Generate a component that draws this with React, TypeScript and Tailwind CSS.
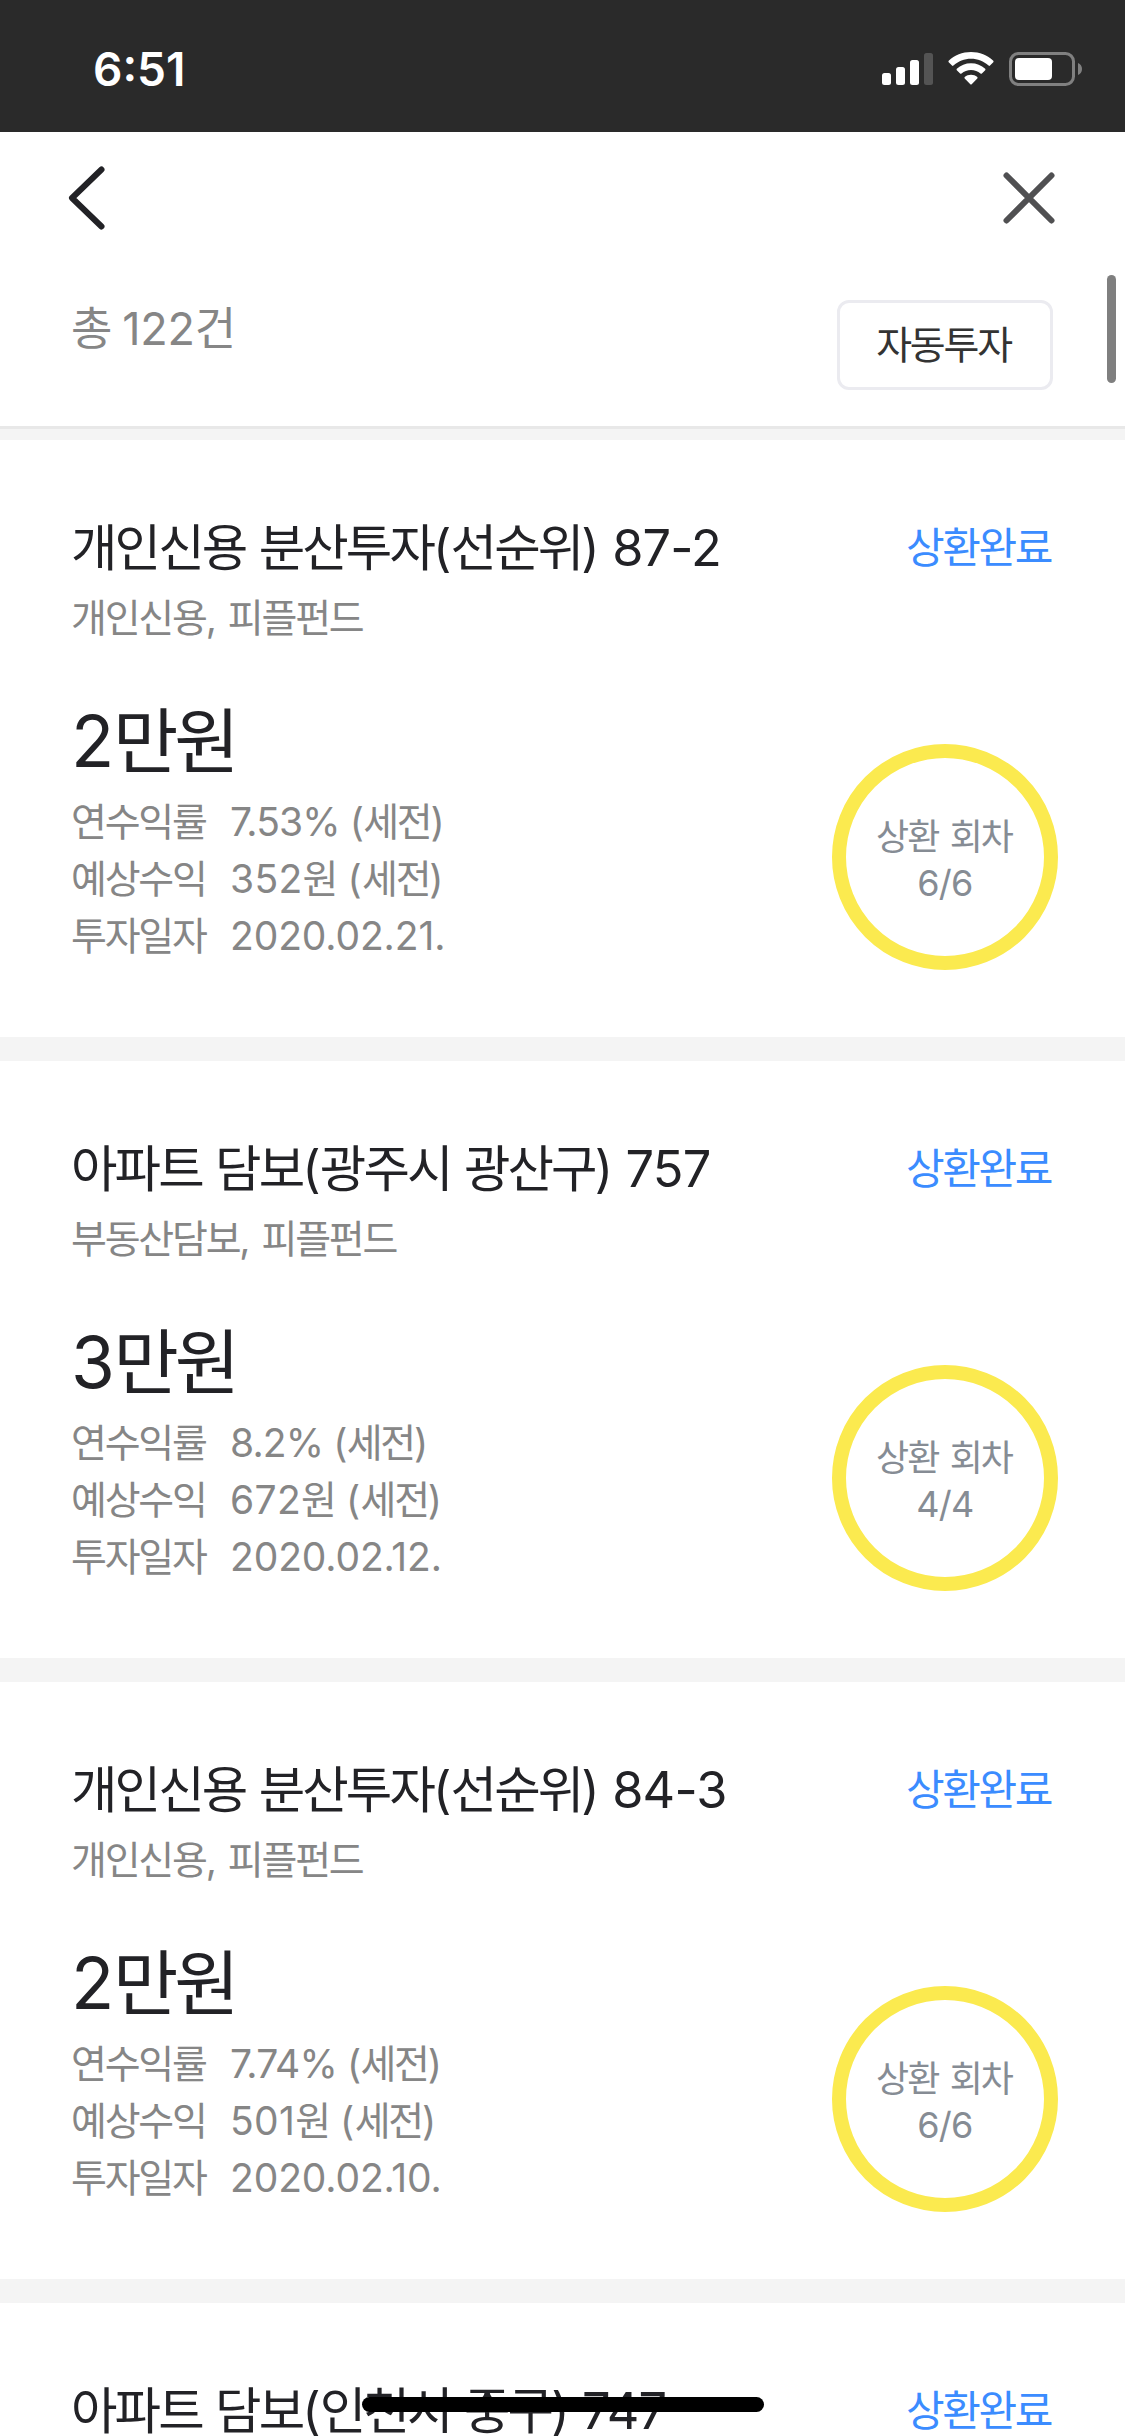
type Investment = {
  title: string;
  category?: string;
  detail?: {
    amount: string;
    rate: string;
    profit: string;
    date: string;
    round: string;
  };
};

const investments: Investment[] = [
  {
    title: "개인신용 분산투자(선순위) 87-2",
    category: "개인신용, 피플펀드",
    detail: {
      amount: "2만원",
      rate: "7.53% (세전)",
      profit: "352원 (세전)",
      date: "2020.02.21.",
      round: "6/6",
    },
  },
  {
    title: "아파트 담보(광주시 광산구) 757",
    category: "부동산담보, 피플펀드",
    detail: {
      amount: "3만원",
      rate: "8.2% (세전)",
      profit: "672원 (세전)",
      date: "2020.02.12.",
      round: "4/4",
    },
  },
  {
    title: "개인신용 분산투자(선순위) 84-3",
    category: "개인신용, 피플펀드",
    detail: {
      amount: "2만원",
      rate: "7.74% (세전)",
      profit: "501원 (세전)",
      date: "2020.02.10.",
      round: "6/6",
    },
  },
  { title: "아파트 담보(인천시 중구) 747" },
];

// Hangul needs tighter tracking than the latin runs next to it.
function Mixed({ text, latin = "tracking-[-0.02em]" }: { text: string; latin?: string }) {
  return (
    <>
      {text.split(/([가-힣]+)/).map((run, i) => (
        <span key={i} className={i % 2 ? "tracking-[-0.057em]" : latin}>
          {run}
        </span>
      ))}
    </>
  );
}

function StatusBar() {
  return (
    <div className="flex h-[132px] shrink-0 items-start justify-between bg-[#2a2a2a] pr-[42px] pl-[93px] text-white">
      <span className="pt-[44px] text-[46px] leading-[50px] font-semibold">6:51</span>
      <div className="flex items-start gap-[15px] pt-[52px]">
        <svg width="51" height="34" viewBox="0 0 51 34" fill="currentColor">
          <rect x="0" y="21" width="9" height="12" rx="2.5" />
          <rect x="14" y="15" width="9" height="18" rx="2.5" />
          <rect x="28" y="8" width="9" height="25" rx="2.5" />
          <rect x="42" y="1" width="9" height="32" rx="2.5" opacity="0.2" />
        </svg>
        <svg width="46" height="34" viewBox="0 0 46 34" fill="currentColor">
          <path d="M23 0C31.500 0 39.500 3.200 45.300 8.800C45.700 9.200 45.700 9.800 45.300 10.200L42 13.600C41.600 14 41 14 40.600 13.600C35.800 9.200 29.600 6.800 23 6.800S10.200 9.200 5.400 13.600C5 14 4.400 14 4 13.600L.7 10.200C.3 9.800 .3 9.200 .7 8.800C6.500 3.200 14.500 0 23 0Z" />
          <path d="M23 11.300C28.400 11.300 33.400 13.300 37.200 16.800C37.600 17.200 37.600 17.800 37.200 18.200L33.900 21.500C33.500 21.900 32.900 21.900 32.500 21.500C29.900 19.300 26.600 18 23 18S16.100 19.300 13.500 21.500C13.100 21.900 12.500 21.900 12.100 21.500L8.800 18.200C8.400 17.800 8.400 17.200 8.800 16.800C12.600 13.300 17.600 11.300 23 11.300Z" />
          <path d="M23 22.700C25.400 22.700 27.600 23.500 29.300 25C29.700 25.400 29.700 26 29.300 26.400L23.700 32.200C23.300 32.600 22.700 32.600 22.300 32.200L16.700 26.400C16.300 26 16.300 25.400 16.700 25C18.400 23.500 20.600 22.700 23 22.700Z" />
        </svg>
        <svg width="74" height="34" viewBox="0 0 74 34">
          <rect x="1.500" y="1.500" width="63" height="31" rx="8" fill="none" stroke="#808080" strokeWidth="3" />
          <rect x="6" y="6" width="37" height="22" rx="4" fill="#fff" />
          <path d="M69 11C71.500 12 73 14.300 73 17S71.500 22 69 23Z" fill="#808080" />
        </svg>
      </div>
    </div>
  );
}

function Header() {
  return (
    <header className="h-[297px] shrink-0 border-b-[3px] border-[#e8e8e8] bg-white">
      <div className="flex h-[132px] items-center justify-between pr-[69px] pl-[67px]">
        <button type="button" aria-label="뒤로">
          <svg width="40" height="66" viewBox="0 0 40 66" fill="none" stroke="#222226" strokeWidth="6" strokeLinecap="round" strokeLinejoin="round">
            <path d="M34.500 4.500 5 33l29.500 28.500" />
          </svg>
        </button>
        <button type="button" aria-label="닫기">
          <svg width="54" height="54" viewBox="0 0 54 54" fill="none" stroke="#505052" strokeWidth="6" strokeLinecap="round">
            <path d="m4.500 4.500 45 45M49.500 4.500l-45 45" />
          </svg>
        </button>
      </div>
      <div className="flex items-start justify-between pr-[72px] pl-[71px]">
        <p className="pt-[38px] text-[45px] leading-[54px] text-[#868686]">
          <Mixed text="총 122건" latin="tracking-[-0.005em]" />
        </p>
        <button
          type="button"
          className="mt-[36px] h-[90px] w-[216px] rounded-[12px] border-[3px] border-[#ebebf0] pr-[3px] text-[39px] leading-[82px] text-[#333]"
        >
          <Mixed text="자동투자" />
        </button>
      </div>
    </header>
  );
}

function DetailRow({ label, value, latin }: { label: string; value: string; latin?: string }) {
  return (
    <div className="flex h-[57px] text-[39px] leading-[57px]">
      <dt className="w-[159px]">
        <Mixed text={label} />
      </dt>
      <dd>
        <Mixed text={value} latin={latin} />
      </dd>
    </div>
  );
}

function InvestmentCard({ item }: { item: Investment }) {
  const { title, category, detail } = item;

  return (
    <article className="mb-6 h-[597px] shrink-0 bg-white pt-[75px] pr-[72px] pl-[71px]">
      <div className="flex items-start justify-between">
        <h2 className="text-[50.5px] leading-[66px] text-[#222226]">
          <Mixed text={title} latin="tracking-[-0.017em]" />
        </h2>
        <span className="pr-[2px] text-[42px] leading-[66px] text-[#3b8cff]">
          <Mixed text="상환완료" />
        </span>
      </div>
      {category ? (
        <p className="mt-[8px] text-[39px] leading-[57px] text-[#868686]">
          <Mixed text={category} latin="tracking-[0em]" />
        </p>
      ) : null}
      {detail ? (
        <div className="mt-[53px] flex items-start justify-between">
          <div>
            <p className="text-[71px] leading-[84px] text-[#222226]">
              <Mixed text={detail.amount} />
            </p>
            <dl className="mt-[10px] text-[#868686]">
              <DetailRow label="연수익률" value={detail.rate} latin="tracking-[-0.022em]" />
              <DetailRow label="예상수익" value={detail.profit} latin="tracking-[0.008em]" />
              <DetailRow label="투자일자" value={detail.date} latin="tracking-[-0.003em]" />
            </dl>
          </div>
          <div className="mt-[45px] -mr-[5px] flex size-[226px] flex-col items-center justify-center rounded-full border-[14px] border-[#fbea4f] pt-[6px] text-[36px] leading-[46px] text-[#868c94]">
            <span className="pr-[2px]">
              <Mixed text="상환 회차" latin="tracking-[0.04em]" />
            </span>
            <span className="tracking-[-0.02em]">{detail.round}</span>
          </div>
        </div>
      ) : null}
    </article>
  );
}

export default function App() {
  return (
    <div className="relative flex h-[2436px] w-[1125px] flex-col overflow-hidden bg-[#f4f4f4] font-[Inter,'Noto_Sans_CJK_KR',sans-serif]">
      <StatusBar />
      <Header />
      <main className="flex flex-col pt-[11px]">
        {investments.map((item) => (
          <InvestmentCard key={item.title} item={item} />
        ))}
      </main>
      <div className="absolute top-[275px] right-[9px] h-[108px] w-[9px] rounded-full bg-[#7f7f7f]" />
      <div className="absolute bottom-[24px] left-[362px] h-[15px] w-[402px] rounded-full bg-black" />
    </div>
  );
}
